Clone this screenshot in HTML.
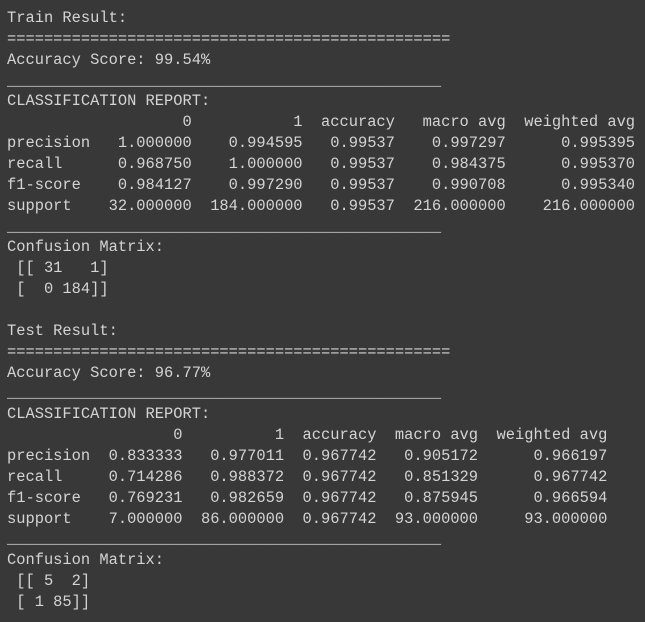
<!DOCTYPE html>
<html><head><meta charset="utf-8"><style>
html,body{margin:0;padding:0;background:#383838;width:645px;height:622px;overflow:hidden}
pre{margin:0;position:absolute;left:7px;top:8px;font-family:"Liberation Mono","DejaVu Sans Mono",monospace;font-size:15.4px;line-height:20.86px;color:#d4d4d4;letter-spacing:0}
</style></head><body><pre>Train Result:
================================================
Accuracy Score: 99.54%
_______________________________________________
CLASSIFICATION REPORT:
                   0           1  accuracy   macro avg  weighted avg
precision   1.000000    0.994595   0.99537    0.997297      0.995395
recall      0.968750    1.000000   0.99537    0.984375      0.995370
f1-score    0.984127    0.997290   0.99537    0.990708      0.995340
support    32.000000  184.000000   0.99537  216.000000    216.000000
_______________________________________________
Confusion Matrix:
 [[ 31   1]
 [  0 184]]

Test Result:
================================================
Accuracy Score: 96.77%
_______________________________________________
CLASSIFICATION REPORT:
                  0          1  accuracy  macro avg  weighted avg
precision  0.833333   0.977011  0.967742   0.905172      0.966197
recall     0.714286   0.988372  0.967742   0.851329      0.967742
f1-score   0.769231   0.982659  0.967742   0.875945      0.966594
support    7.000000  86.000000  0.967742  93.000000     93.000000
_______________________________________________
Confusion Matrix:
 [[ 5  2]
 [ 1 85]]</pre></body></html>
